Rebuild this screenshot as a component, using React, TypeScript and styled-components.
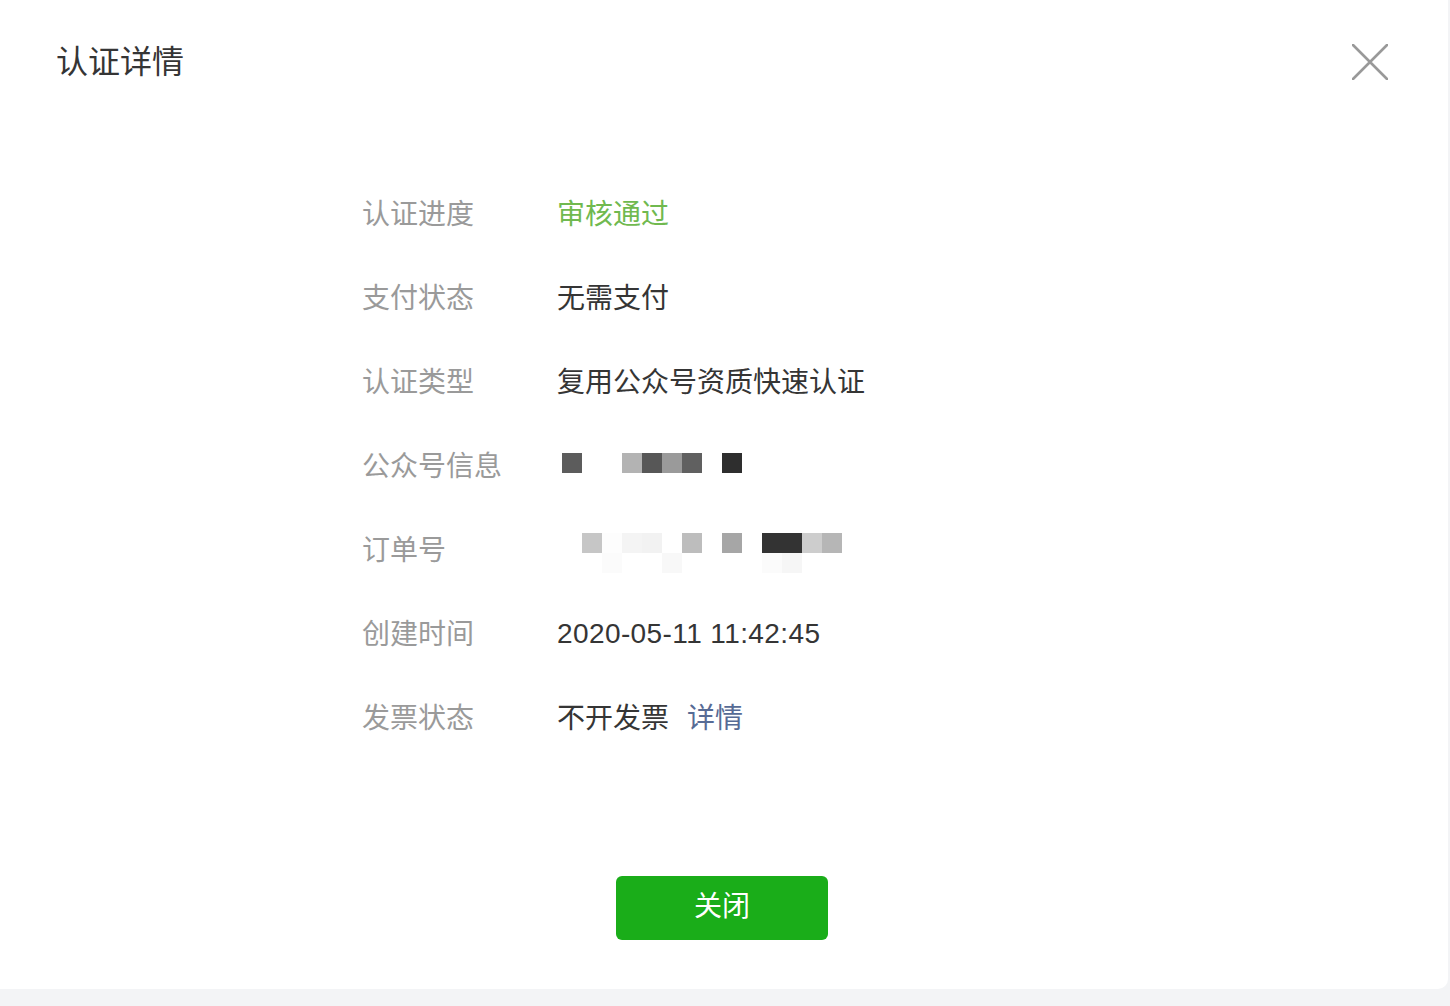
import React from "react";
import styled, { createGlobalStyle } from "styled-components";

const Global = createGlobalStyle`
  html, body { margin: 0; padding: 0; background: #f3f4f6; }
  body { font-family: "Liberation Sans", "Noto Sans CJK SC", sans-serif; }
  * { box-sizing: border-box; }
`;

const Dialog = styled.div`
  width: 1448px;
  height: 989px;
  background: #ffffff;
  border-bottom-right-radius: 10px;
  display: flex;
  flex-direction: column;
  padding: 40px 60px 49px 56px;
`;

const Header = styled.div`
  display: flex;
  align-items: center;
  justify-content: space-between;
  height: 44px;
`;

const Title = styled.h1`
  margin: 0;
  font-size: 32px;
  font-weight: 400;
  line-height: 44px;
  color: #353535;
`;

const CloseButton = styled.button`
  width: 36px;
  height: 36px;
  padding: 0;
  border: 0;
  background: transparent;
  display: flex;
  cursor: pointer;
`;

const List = styled.div`
  margin: 86px 0 0 306px;
  display: flex;
  flex-direction: column;
`;

const Row = styled.div`
  display: flex;
  align-items: center;
  height: 84px;
  font-size: 28px;
`;

const Label = styled.div`
  width: 195px;
  flex: none;
  color: #9a9a9a;
`;

const Value = styled.div<{ $tone?: "ok" | "default" }>`
  color: ${(p) => (p.$tone === "ok" ? "#70b94f" : "#353535")};
  display: flex;
  align-items: center;
`;

const Time = styled.span`
  letter-spacing: 0.4px;
  margin-top: 3px;
`;

const Link = styled.a`
  margin-left: 18px;
  color: #576b95;
  text-decoration: none;
`;

const Mosaic = styled.div<{ $offset: number; $shift: number }>`
  display: flex;
  flex-direction: column;
  margin-left: ${(p) => p.$offset}px;
  margin-top: ${(p) => p.$shift}px;
`;

const MosaicLine = styled.div`
  display: flex;
`;

const Cell = styled.span<{ $c: string }>`
  width: 20px;
  height: 20px;
  background: ${(p) => p.$c};
`;

const Footer = styled.div`
  margin-top: auto;
  display: flex;
  justify-content: center;
`;

const PrimaryButton = styled.button`
  width: 212px;
  height: 64px;
  border: 0;
  border-radius: 6px;
  background: #1aad19;
  color: #ffffff;
  font-family: "Liberation Sans", "Noto Sans CJK SC", sans-serif;
  font-size: 28px;
  line-height: 1;
  padding: 0 0 2px;
  cursor: pointer;
`;

const T = "transparent";
const accountCells = [["#5c5c5c", T, T, "#b3b3b3", "#575757", "#9a9a9a", "#606060", T, "#2e2e2e"]];
const orderCells = [
  ["#c6c6c6", "#fdfdfd", "#f4f4f4", "#f2f2f2", T, "#bdbdbd", T, "#a6a6a6", T, "#333333", "#333333", "#cdcdcd", "#b6b6b6"],
  [T, "#fbfbfb", T, T, "#f8f8f8", T, T, T, T, "#fbfbfb", "#f6f6f6", T, T],
];

function MosaicBlock({ rows, offset, shift }: { rows: string[][]; offset: number; shift: number }) {
  return (
    <Mosaic $offset={offset} $shift={shift}>
      {rows.map((line, i) => (
        <MosaicLine key={i}>
          {line.map((c, j) => (
            <Cell key={j} $c={c} />
          ))}
        </MosaicLine>
      ))}
    </Mosaic>
  );
}

export default function App() {
  return (
    <>
      <Global />
      <Dialog>
        <Header>
          <Title>认证详情</Title>
          <CloseButton aria-label="关闭">
            <svg width="36" height="36" viewBox="0 0 36 36">
              <path d="M1 1 L35 35 M35 1 L1 35" stroke="#999999" strokeWidth="2.6" strokeLinecap="round" />
            </svg>
          </CloseButton>
        </Header>
        <List>
          <Row>
            <Label>认证进度</Label>
            <Value $tone="ok">审核通过</Value>
          </Row>
          <Row>
            <Label>支付状态</Label>
            <Value>无需支付</Value>
          </Row>
          <Row>
            <Label>认证类型</Label>
            <Value>复用公众号资质快速认证</Value>
          </Row>
          <Row>
            <Label>公众号信息</Label>
            <MosaicBlock rows={accountCells} offset={5} shift={-2} />
          </Row>
          <Row>
            <Label>订单号</Label>
            <MosaicBlock rows={orderCells} offset={25} shift={10} />
          </Row>
          <Row>
            <Label>创建时间</Label>
            <Value>
              <Time>2020-05-11 11:42:45</Time>
            </Value>
          </Row>
          <Row>
            <Label>发票状态</Label>
            <Value>
              不开发票
              <Link href="#">详情</Link>
            </Value>
          </Row>
        </List>
        <Footer>
          <PrimaryButton>关闭</PrimaryButton>
        </Footer>
      </Dialog>
    </>
  );
}
